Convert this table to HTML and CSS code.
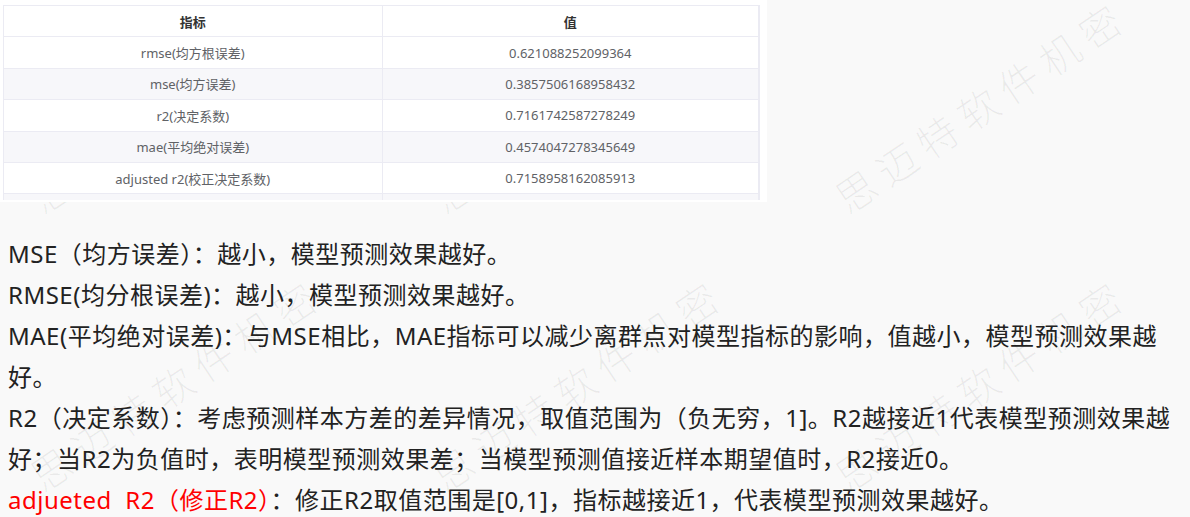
FILE: index.html
```html
<!DOCTYPE html>
<html lang="zh-CN">

<head>
    <meta charset="UTF-8">
    <meta name="viewport" content="width=device-width, initial-scale=1.0">
    <title>模型评估指标</title>
    <link rel="stylesheet" href="styles.css">
</head>

<body>
    <div class="page">
        <div class="table-panel">
            <div class="table-scroll">
                <table class="metrics">
                    <colgroup>
                        <col class="col-name">
                        <col class="col-value">
                    </colgroup>
                    <thead>
                        <tr>
                            <th>指标</th>
                            <th>值</th>
                        </tr>
                    </thead>
                    <tbody>
                        <tr>
                            <td>rmse(均方根误差)</td>
                            <td>0.621088252099364</td>
                        </tr>
                        <tr>
                            <td>mse(均方误差)</td>
                            <td>0.3857506168958432</td>
                        </tr>
                        <tr>
                            <td>r2(决定系数)</td>
                            <td>0.7161742587278249</td>
                        </tr>
                        <tr>
                            <td>mae(平均绝对误差)</td>
                            <td>0.4574047278345649</td>
                        </tr>
                        <tr>
                            <td>adjusted r2(校正决定系数)</td>
                            <td>0.7158958162085913</td>
                        </tr>
                        <tr>
                            <td></td>
                            <td></td>
                        </tr>
                    </tbody>
                </table>
            </div>
        </div>

        <div class="notes">
            <p>MSE（均方误差）：越小，模型预测效果越好。</p>
            <p>RMSE(均分根误差)：越小，模型预测效果越好。</p>
            <p>MAE(平均绝对误差)：与MSE相比，MAE指标可以减少离群点对模型指标的影响，值越小，模型预测效果越好。</p>
            <p>R2（决定系数）：考虑预测样本方差的差异情况，取值范围为（负无穷，1]。R2越接近1代表模型预测效果越好；当R2为负值时，表明模型预测效果差；当模型预测值接近样本期望值时，R2接近0。</p>
            <p><span class="highlight">adjueted&nbsp; R2（修正R2）</span>：修正R2取值范围是[0,1]，指标越接近1，代表模型预测效果越好。</p>
        </div>

        <!-- watermark -->
        <div class="watermarks">
            <span class="wm wm-a">思迈特软件机密</span>
            <span class="wm wm-b">思迈特软件机密</span>
            <span class="wm wm-c">思迈特软件机密</span>
            <span class="wm wm-d">思迈特软件机密</span>
            <span class="wm wm-e">思迈特软件机密</span>
            <span class="wm wm-f">思迈特软件机密</span>
        </div>
    </div>
</body>

</html>
```

FILE: styles.css
```css
body {
    margin: 0;
    background-color: #f9f9f9;
    font-family: "Noto Sans", "Noto Sans CJK SC", sans-serif;
    color: #222222;
}

.page {
    position: relative;
    height: 517px;
    overflow: hidden;
}

.table-panel {
    position: relative;
    z-index: 2;
    width: 767px;
    height: 202px;
    box-sizing: border-box;
    padding: 5px 0 0 3px;
    background-color: #ffffff;
}

.table-scroll {
    width: 757px;
    height: 195px;
    box-sizing: border-box;
    border: 1px solid #ebebf3;
    border-right-width: 2px;
    border-bottom: none;
    overflow: hidden;
}

.metrics {
    width: 754px;
    table-layout: fixed;
    border-collapse: collapse;
    font-size: 13px;
    color: #606266;
}

.col-name {
    width: 378px;
}

.metrics th,
.metrics td {
    height: 30.4px;
    padding: 0;
    text-align: center;
    border-bottom: 1px solid #ebebf3;
}

.metrics th:first-child,
.metrics td:first-child {
    border-right: 1px solid #ebebf3;
}

.metrics th {
    color: #333333;
    font-weight: bold;
}

.metrics tbody tr:nth-child(even) {
    background-color: #f7f7fa;
}

.notes {
    margin-top: 31px;
    padding: 0 4px 0 8px;
    font-size: 24px;
    line-height: 41px;
    letter-spacing: 0.5px;
}

.notes p {
    margin: 0;
}

.highlight {
    color: #ff0000;
}

/* watermark */
.watermarks {
    position: absolute;
    top: 0;
    left: 0;
    width: 100%;
    height: 100%;
    z-index: 1;
    pointer-events: none;
}

.wm {
    position: absolute;
    font-family: "Noto Sans CJK SC", sans-serif;
    font-size: 40px;
    font-weight: 300;
    line-height: 40px;
    letter-spacing: 9px;
    white-space: nowrap;
    color: rgba(0, 0, 0, 0.06);
    transform: rotate(-34deg);
    transform-origin: 0 100%;
}

.wm-a { left: 45px; top: 178px; }
.wm-b { left: 447px; top: 178px; }
.wm-c { left: 850px; top: 178px; }
.wm-d { left: 45px; top: 456px; }
.wm-e { left: 447px; top: 456px; }
.wm-f { left: 850px; top: 456px; }
```
